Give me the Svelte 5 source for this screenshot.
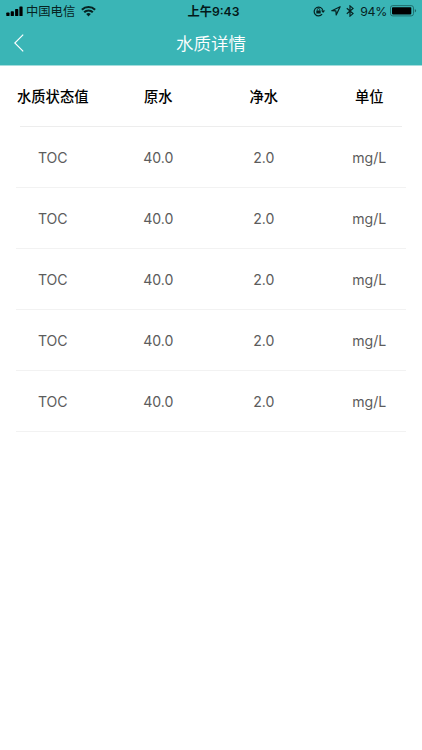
<script>
    const columns = ['水质状态值', '原水', '净水', '单位'];

    const rows = [
        { name: 'TOC', raw: '40.0', clean: '2.0', unit: 'mg/L' },
        { name: 'TOC', raw: '40.0', clean: '2.0', unit: 'mg/L' },
        { name: 'TOC', raw: '40.0', clean: '2.0', unit: 'mg/L' },
        { name: 'TOC', raw: '40.0', clean: '2.0', unit: 'mg/L' },
        { name: 'TOC', raw: '40.0', clean: '2.0', unit: 'mg/L' }
    ];
</script>

<div class="page">
    <header>
        <div class="status">
            <div class="left">
                <svg class="signal" width="17" height="11" viewBox="0 0 17 11">
                    <rect x="0.3" y="6.6" width="3.2" height="3.5" rx="0.7" />
                    <rect x="4.7" y="5.2" width="3.2" height="4.9" rx="0.7" />
                    <rect x="9.1" y="3" width="3.2" height="7.1" rx="0.7" />
                    <rect x="13.4" y="0.4" width="3.2" height="9.7" rx="0.7" />
                </svg>
                <span class="carrier">中国电信</span>
                <svg class="wifi" width="15" height="11" viewBox="0 0 15 11">
                    <path d="M0.9 3.8a9.3 9.3 0 0 1 13.2 0" />
                    <path d="M3.2 6.3a6 6 0 0 1 8.6 0" />
                    <path class="fill" d="M5.2 8.1a3.2 3.2 0 0 1 4.6 0L7.5 10.4z" />
                </svg>
            </div>
            <div class="time">上午9:43</div>
            <div class="right">
                <svg class="lock" width="13" height="11" viewBox="0 0 13 11">
                    <path d="M9.1 8.2A4.4 4.4 0 1 1 9.9 4.6" />
                    <path class="fill" d="M8 4.4h4.2L10.1 7.1z" />
                    <rect class="fill" x="3.3" y="4.4" width="4.4" height="3.2" rx="0.4" />
                    <path class="shackle" d="M4.3 4.6v-1a1.2 1.2 0 0 1 2.4 0v1" />
                </svg>
                <svg class="location" width="10" height="10" viewBox="0 0 10 10">
                    <path d="M9.1 0.7L0.8 4.7L4.9 4.9L5.2 9z" />
                </svg>
                <svg class="bluetooth" width="8" height="12" viewBox="0 0 8 12">
                    <path d="M0.8 3.3l6.2 5.3L4 11.1V0.9l3 2.5L0.8 8.7" />
                </svg>
                <span class="percent">94%</span>
                <svg class="battery" width="27" height="12" viewBox="0 0 27 12">
                    <rect class="case" x="0.5" y="0.6" width="23" height="10.3" rx="2.3" />
                    <rect x="2" y="2.2" width="19.3" height="7.2" rx="0.8" />
                    <path class="tip" d="M24.8 4v3.6q1.3-.5 1.3-1.8T24.8 4z" />
                </svg>
            </div>
        </div>
        <div class="nav">
            <button class="back" aria-label="返回">
                <svg width="10" height="18" viewBox="0 0 10 18">
                    <path d="M9.2 0.6L0.8 9l8.4 8.4" />
                </svg>
            </button>
            <h1>水质详情</h1>
        </div>
    </header>

    <div class="row head">
        {#each columns as column}
            <div class="cell">{column}</div>
        {/each}
    </div>
    {#each rows as row}
        <div class="row">
            <div class="cell">{row.name}</div>
            <div class="cell">{row.raw}</div>
            <div class="cell">{row.clean}</div>
            <div class="cell">{row.unit}</div>
        </div>
    {/each}
</div>

<style>
    :global(body) {
        background: #fff;
    }

    .page {
        min-height: 750px;
        background: #fff;
        font-family: Inter, "Noto Sans CJK SC", sans-serif;
    }

    header {
        height: 65px;
        background: #3ab5b6;
        border-bottom: 1px solid #a5dddd;
        box-sizing: content-box;
    }

    .status {
        display: grid;
        grid-template-columns: 1fr auto 1fr;
        align-items: center;
        height: 21px;
        padding: 0 5px 0 6px;
        color: #062322;
        font-size: 12.3px;
        line-height: 22px;
        white-space: nowrap;
    }

    .left,
    .right {
        display: flex;
        align-items: center;
    }

    .right {
        justify-content: flex-end;
    }

    .signal {
        margin-right: 3px;
    }

    .wifi {
        margin-left: 6px;
    }

    .wifi path,
    .lock path,
    .bluetooth path,
    .location path {
        fill: none;
        stroke: #062322;
    }

    .wifi path {
        stroke-width: 2.1;
    }

    .wifi .fill,
    .lock .fill {
        fill: #062322;
        stroke: none;
    }

    .lock,
    .location {
        margin-bottom: 1px;
    }

    .lock path {
        stroke-width: 1.2;
    }

    .lock .shackle {
        stroke-width: 0.9;
    }

    .location {
        margin-left: 5px;
    }

    .location path {
        stroke-width: 1.2;
        stroke-linejoin: round;
    }

    .bluetooth {
        margin: 0 6px 2px 5px;
    }

    .bluetooth path {
        stroke-width: 1.2;
    }

    .percent {
        margin-right: -1px;
        letter-spacing: -0.3px;
    }

    .time {
        padding: 1px 0 0 4px;
        color: #041a1a;
        font-size: 12.2px;
        font-weight: 600;
    }

    .battery {
        margin: 0 0 2px 4px;
    }

    .battery .case {
        fill: none;
        stroke: #1d6665;
        stroke-width: 0.9;
    }

    .battery .tip {
        fill: #1d6665;
    }

    .nav {
        display: grid;
        grid-template-columns: 40px 1fr 40px;
        align-items: center;
        height: 44px;
        color: #fff;
    }

    .back {
        display: flex;
        padding: 0 0 0 14px;
        border: 0;
        background: none;
    }

    .back path {
        fill: none;
        stroke: #fff;
        stroke-width: 1.2;
    }

    h1 {
        margin: 0;
        padding-top: 2px;
        font-size: 17.5px;
        font-weight: 350;
        line-height: 42px;
        text-align: center;
    }

    .row {
        display: flex;
        height: 60px;
        margin: 0 16px;
        border-bottom: 1px solid #f2f2f2;
        color: #5c5c5c;
        font-size: 14.1px;
        line-height: 62px;
    }

    .head {
        margin: 0 20px;
        border-color: #ededed;
        color: #000;
        font-size: 14.3px;
        font-weight: 500;
    }

    /* cells split the full screen width, the dividers stay inset */
    .cell {
        flex: none;
        width: 105.5px;
        text-align: center;
    }

    .row .cell:first-child {
        margin-left: -16px;
    }

    .head .cell:first-child {
        margin-left: -20px;
    }
</style>
